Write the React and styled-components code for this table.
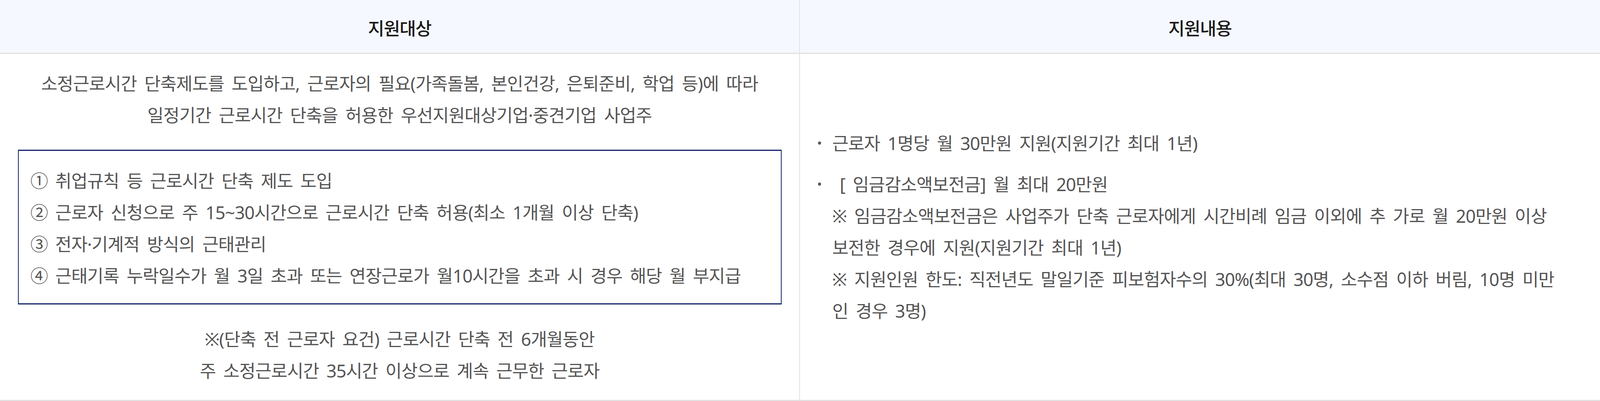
import React from "react";
import styled, { createGlobalStyle } from "styled-components";

// Sizes are given in pixels of the 4320x1026 frame: horizontal ones and fonts
// in vw, vertical ones in vh, so the table fills the frame exactly.
const u = (n) => `${(n / 43.2).toFixed(4)}vw`;
const v = (n) => `${(n / 10.26).toFixed(4)}vh`;

const FONT = `"Noto Sans", "Noto Sans CJK KR", sans-serif`;

const Global = createGlobalStyle`
  html, body { margin: 0; padding: 0; background: #ffffff; overflow: hidden; height: 100%; }
  body {
    font-family: ${FONT};
    -webkit-font-smoothing: antialiased;
  }
`;

const Table = styled.div`
  display: grid;
  grid-template-columns: repeat(2, minmax(0, 1fr));
  grid-template-rows: ${v(138)} minmax(0, 1fr);
  width: 100vw;
  height: 100vh;
  overflow: hidden;
  font-family: ${FONT};
  letter-spacing: ${u(-1.1)};
  word-spacing: ${u(9)};
`;

const HeadCell = styled.div`
  box-sizing: border-box;
  display: flex;
  align-items: center;
  justify-content: center;
  background: #f5f8fe;
  border-bottom: ${v(3)} solid #e2e2e2;
  border-right: ${(p) => (p.$divider ? `${u(3)} solid #e2e2e2` : "none")};
  font-size: ${u(48)};
  font-weight: 500;
  letter-spacing: ${u(-1.5)};
  color: #1b1b1b;
  padding-top: ${v(4)};
`;

const BodyCell = styled.div`
  box-sizing: border-box;
  min-width: 0;
  overflow: hidden;
  padding: ${v(34)} ${u(48)};
  display: flex;
  flex-direction: column;
  justify-content: center;
  align-items: ${(p) => (p.$center ? "center" : "stretch")};
  border-right: ${(p) => (p.$divider ? `${u(3)} solid #e2e2e2` : "none")};
  border-bottom: ${v(3)} solid #e2e2e2;
  font-size: ${u(48)};
  line-height: ${v(81)};
  color: #555555;
`;

const CenterText = styled.p`
  margin: 0;
  text-align: center;
  white-space: nowrap;
`;

const Box = styled.div`
  align-self: stretch;
  margin: ${v(48)} 0;
  padding: ${v(36)} ${u(32)} ${v(30)};
  border-style: solid;
  border-color: #13246a;
  border-width: ${v(3)} ${u(3)};
  text-align: left;
`;

const BoxLine = styled.div`
  white-space: nowrap;
`;

const List = styled.ul`
  list-style: none;
  margin: 0;
  padding: 0;
  display: flex;
  flex-direction: column;
  gap: ${v(24)};
`;

const Item = styled.li`
  display: flex;
  align-items: flex-start;
`;

const Bullet = styled.span`
  flex: 0 0 ${u(39)};
  height: ${v(81)};
  display: flex;
  align-items: center;
  &::before {
    content: "";
    width: ${u(9)};
    height: ${u(9)};
    border-radius: 50%;
    background: #5a5a5a;
  }
`;

const ItemBody = styled.div`
  display: flex;
  flex-direction: column;
`;

const ItemLine = styled.span`
  white-space: pre;
`;

export default function App() {
  return (
    <>
      <Global />
      <Table>
        <HeadCell $divider>지원대상</HeadCell>
        <HeadCell>지원내용</HeadCell>
        <BodyCell $divider $center>
          <CenterText>
            소정근로시간 단축제도를 도입하고, 근로자의 필요(가족돌봄, 본인건강, 은퇴준비, 학업 등)에 따라
            <br />
            일정기간 근로시간 단축을 허용한 우선지원대상기업·중견기업 사업주
          </CenterText>
          <Box>
            <BoxLine>① 취업규칙 등 근로시간 단축 제도 도입</BoxLine>
            <BoxLine>② 근로자 신청으로 주 15~30시간으로 근로시간 단축 허용(최소 1개월 이상 단축)</BoxLine>
            <BoxLine>③ 전자·기계적 방식의 근태관리</BoxLine>
            <BoxLine>④ 근태기록 누락일수가 월 3일 초과 또는 연장근로가 월10시간을 초과 시 경우 해당 월 부지급</BoxLine>
          </Box>
          <CenterText>
            ※(단축 전 근로자 요건) 근로시간 단축 전 6개월동안
            <br />
            주 소정근로시간 35시간 이상으로 계속 근무한 근로자
          </CenterText>
        </BodyCell>
        <BodyCell>
          <List>
            <Item>
              <Bullet />
              <ItemBody>
                <ItemLine>근로자 1명당 월 30만원 지원(지원기간 최대 1년)</ItemLine>
              </ItemBody>
            </Item>
            <Item>
              <Bullet />
              <ItemBody>
                <ItemLine>{"\u00a0[ 임금감소액보전금] 월 최대 20만원"}</ItemLine>
                <ItemLine>※ 임금감소액보전금은 사업주가 단축 근로자에게 시간비례 임금 이외에 추 가로 월 20만원 이상</ItemLine>
                <ItemLine>보전한 경우에 지원(지원기간 최대 1년)</ItemLine>
                <ItemLine>※ 지원인원 한도: 직전년도 말일기준 피보험자수의 30%(최대 30명, 소수점 이하 버림, 10명 미만</ItemLine>
                <ItemLine>인 경우 3명)</ItemLine>
              </ItemBody>
            </Item>
          </List>
        </BodyCell>
      </Table>
    </>
  );
}
